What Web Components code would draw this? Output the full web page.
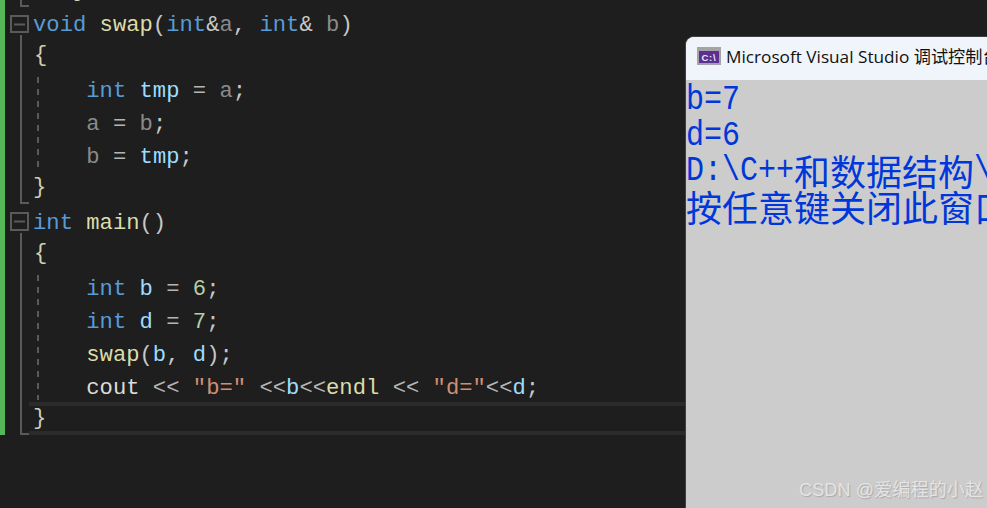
<!DOCTYPE html>
<html><head><meta charset="utf-8"><style>
html,body{margin:0;padding:0;width:987px;height:508px;overflow:hidden;background:#1e1e1e}
</style></head><body>
<vs-editor>
<code-line><i class="c">///</i><i class="t">}</i></code-line>
<code-line><i class="k">void</i> <i class="f">swap</i><i class="p">(</i><i class="k">int</i><i class="p">&amp;</i><i class="g">a</i><i class="p">,</i> <i class="k">int</i><i class="p">&amp;</i> <i class="g">b</i><i class="p">)</i></code-line>
<code-line><i class="b o1">{</i></code-line>
<code-line>    <i class="k">int</i> <i class="v">tmp</i> <i class="o">=</i> <i class="g">a</i><i class="p">;</i></code-line>
<code-line>    <i class="g">a</i> <i class="o">=</i> <i class="g">b</i><i class="p">;</i></code-line>
<code-line>    <i class="g">b</i> <i class="o">=</i> <i class="v">tmp</i><i class="p">;</i></code-line>
<code-line><i class="b">}</i></code-line>
<code-line><i class="k">int</i> <i class="f">main</i><i class="p">()</i></code-line>
<code-line><i class="b o1">{</i></code-line>
<code-line>    <i class="k">int</i> <i class="v">b</i> <i class="o">=</i> <i class="n">6</i><i class="p">;</i></code-line>
<code-line>    <i class="k">int</i> <i class="v">d</i> <i class="o">=</i> <i class="n">7</i><i class="p">;</i></code-line>
<code-line>    <i class="f">swap</i><i class="p">(</i><i class="v">b</i><i class="p">,</i> <i class="v">d</i><i class="p">);</i></code-line>
<code-line>    <i class="w">cout</i> <i class="o">&lt;&lt;</i> <i class="s">"b="</i> <i class="o">&lt;&lt;</i><i class="v">b</i><i class="o">&lt;&lt;</i><i class="f">endl</i> <i class="o">&lt;&lt;</i> <i class="s">"d="</i><i class="o">&lt;&lt;</i><i class="v">d</i><i class="p">;</i></code-line>
<code-line current><i class="b">}</i></code-line>
</vs-editor>
<console-window title-text="Microsoft Visual Studio 调试控制台">
<console-out><u>b=7</u></console-out>
<console-out><u>d=6</u></console-out>
<console-out><u class="up">D:\C++</u><b>和数据结构</b><u class="up">\</u></console-out>
<console-out><b>按任意键关闭此窗口</b></console-out>
</console-window>
<water-mark>CSDN @爱编程的小赵</water-mark>
<script>
function def(name, html){
  customElements.define(name, class extends HTMLElement{
    constructor(){super();this.attachShadow({mode:'open'}).innerHTML=html;}
    connectedCallback(){const r=this.shadowRoot.querySelector('[data-t]');if(r)r.textContent=this.getAttribute('title-text')||'';}
  });
}
def('vs-editor',`<style>
:host{display:block;position:relative;width:987px;height:508px;overflow:hidden;background:#1e1e1e}
.bar{position:absolute;left:0;top:0;width:5px;height:435px;background:#56b856}
.lines{margin-top:-27px;display:flex;flex-direction:column}
svg{position:absolute;left:0;top:0}
</style><div class="lines"><slot></slot></div><div class="bar"></div>
<svg width="60" height="508" fill="none" stroke="#5a5a5a" stroke-width="2">
<path d="M21 0V6H29"/><rect x="11" y="16" width="17" height="16"/><path d="M14 24.5H25M21 35V203H29"/>
<rect x="11" y="213" width="17" height="17"/><path d="M14 221.5H25M21 233V434H29"/>
<path d="M38 77V170M38 275V400" stroke-dasharray="6 6"/>
</svg>`);
def('code-line',`<style>
:host{display:block;box-sizing:border-box;height:33px;padding-top:3px;margin-left:33px;width:652px;overflow:visible;font:22.2px/33px "Liberation Mono",monospace;white-space:pre;color:#dcdcdc}
:host([current]){margin-left:29px;padding-left:4px;width:656px;box-shadow:inset 0 4px 0 #2b2b2b,inset 0 -4px 0 #2b2b2b}
::slotted(i){font-style:normal}
::slotted(.k){color:#569cd6}::slotted(.f){color:#dcdcaa}::slotted(.p){color:#c8c8c8}::slotted(.g){color:#8a8a8a}
::slotted(.v){color:#9cdcfe}::slotted(.o){color:#b4b4b4}::slotted(.n){color:#b5cea8}::slotted(.s){color:#cf8f72}
::slotted(.b){color:#cfcfb4;display:inline-block;transform:translateY(-3px)}
::slotted(.o1){transform:translate(1px,-3px)}
::slotted(.t){color:#cfcfb4;display:inline-block;transform:translateY(-2px)}
::slotted(.c){color:#6a9955;display:inline-block;transform:translateY(2px)}
::slotted(.w){color:#dcdcdc}
</style><slot></slot>`);
def('console-window',`<style>
:host{display:block;position:absolute;left:685px;top:36px;width:302px;height:472px;box-sizing:border-box;border:solid #404040;border-width:1px 0 0 1px;border-radius:9px 0 0 0;overflow:hidden;background:#ccc}
.t{display:flex;align-items:center;box-sizing:border-box;height:43px;background:#eff5fa;padding:0 0 6px 11px;gap:5px;font:17.2px "Open Sans","Noto Sans CJK SC",sans-serif;color:#111;white-space:nowrap}
.b{display:flex;flex-direction:column}
svg{flex:none}
</style><div class="t"><svg width="24" height="18" viewBox="0 0 24 18"><rect width="24" height="18" fill="#a3a3a8"/><rect x="2" y="4" width="20" height="12" fill="#5d2f92"/><text x="12" y="14" text-anchor="middle" font-family="Liberation Sans" font-size="9.5" font-weight="700" letter-spacing=".8" fill="#e8e8f0">C:\\</text></svg><span data-t></span></div><div class="b"><slot></slot></div>`);
def('console-out',`<style>
:host{display:block;height:36px;font:30px/36px "Liberation Mono","Noto Sans CJK SC",monospace;color:#0037da;white-space:pre}
::slotted(b){font:400 36px/36px "Noto Sans CJK SC",sans-serif}
::slotted(u){text-decoration:none;display:inline-block;height:36px;transform:translateY(3px) scaleY(1.18);transform-origin:50% 27px}
::slotted(u.up){transform:translateY(-6px) scaleY(1.18)}
</style><slot></slot>`);
def('water-mark',`<style>
:host{display:block;position:absolute;left:799px;top:478px;font:18px/24px "Liberation Sans","Noto Sans CJK SC",sans-serif;letter-spacing:.15px;color:#e4e4e4;text-shadow:1px 1px 1px #a8a8a8;white-space:nowrap}
</style><slot></slot>`);
</script>
</body></html>
